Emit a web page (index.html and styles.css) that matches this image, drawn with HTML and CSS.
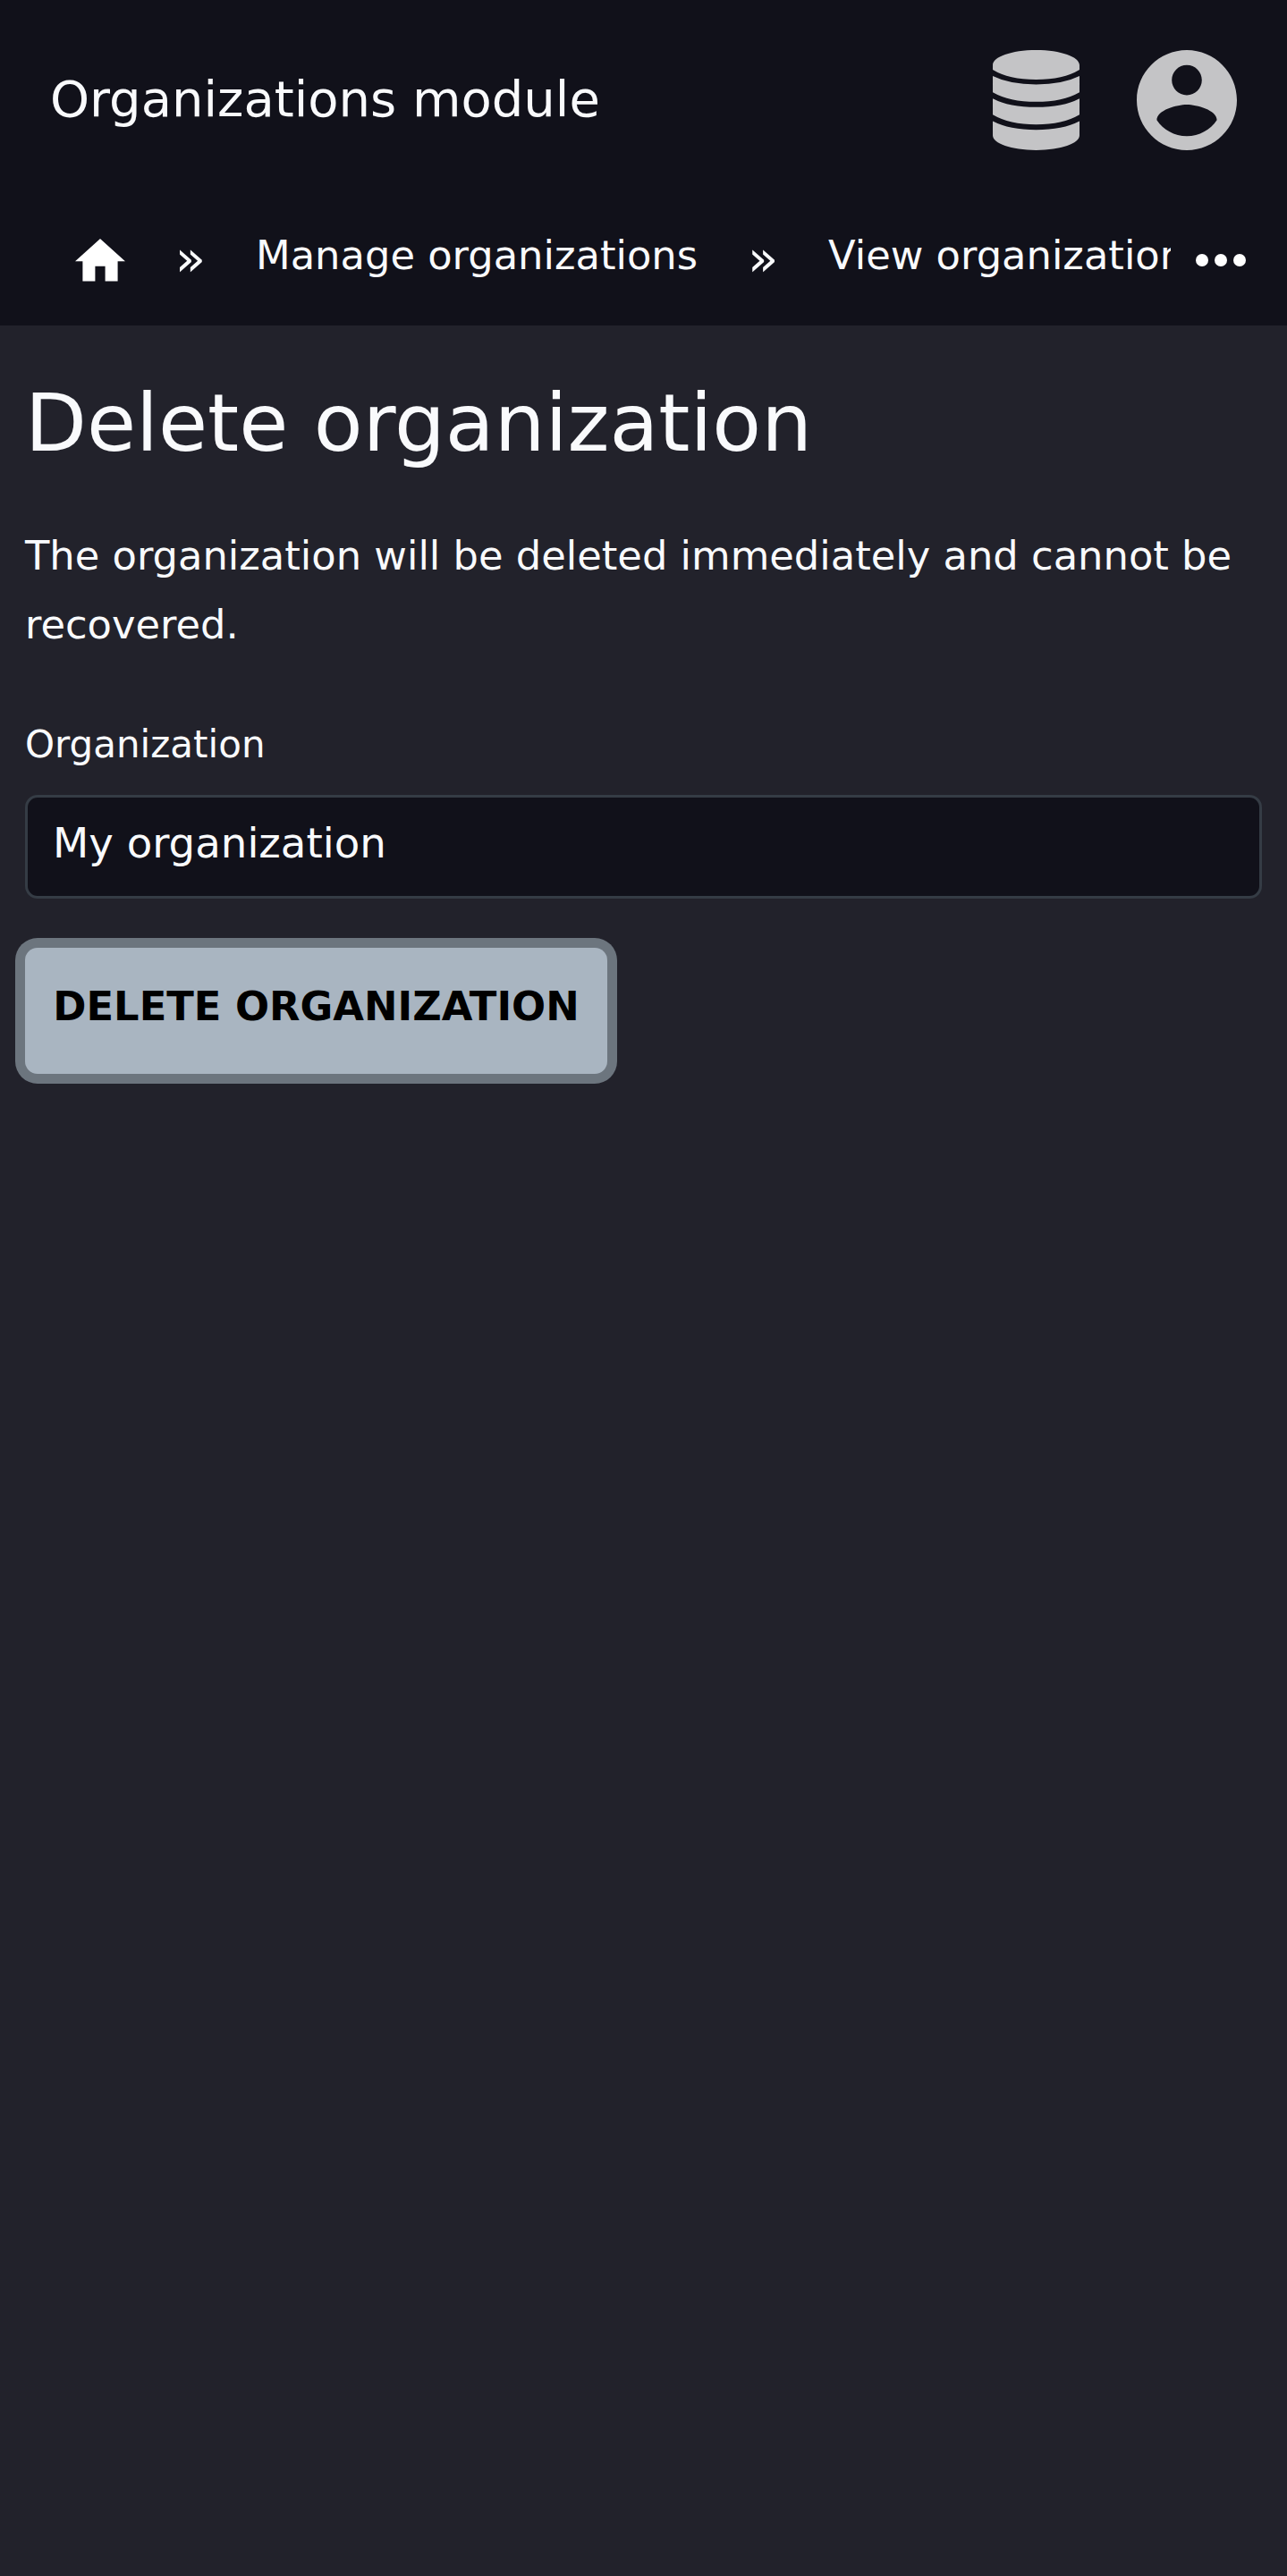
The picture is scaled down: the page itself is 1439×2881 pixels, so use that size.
FILE: index.html
```html
<!DOCTYPE html>
<html lang="en">
<head>
<meta charset="utf-8">
<title>Delete organization</title>
<link rel="stylesheet" href="styles.css">
</head>
<body>
<header class="header">
  <div class="topbar">
    <span class="brand">Organizations module</span>
    <nav class="actions">
      <svg class="icon-db" viewBox="0 0 290 335"><path d="M0 50C0 23 62 0 145 0S290 23 290 50V66Q236 99 145 99T0 66ZM0 87Q56 115 145 115T290 87V141Q234 173 145 173T0 141ZM0 162Q56 191 145 191T290 162V216Q234 249 145 249T0 216ZM0 238Q56 267 145 267T290 238V286C290 312 228 335 145 335S0 312 0 286Z"/></svg>
      <svg class="icon-user" viewBox="2 2 20 20"><path d="M12 2C6.48 2 2 6.48 2 12s4.48 10 10 10 10-4.48 10-10S17.52 2 12 2zm0 3c1.66 0 3 1.34 3 3s-1.34 3-3 3-3-1.34-3-3 1.340-3 3-3zm0 14.200c-2.500 0-4.710-1.280-6-3.220.030-1.990 4-3.080 6-3.080 1.990 0 5.970 1.090 6 3.080-1.290 1.940-3.500 3.220-6 3.220z"/></svg>
    </nav>
  </div>
  <nav class="crumbs">
    <div class="trail">
      <svg class="icon-home" viewBox="2 3 20 17"><path d="M10 20v-6h4v6h5v-8h3L12 3 2 12h3v8z"/></svg>
      <span class="sep">»</span>
      <span class="crumb">Manage organizations</span>
      <span class="sep">»</span>
      <span class="crumb">View organization</span>
    </div>
    <svg class="icon-more" viewBox="0 0 56 14"><circle cx="7" cy="7" r="7"/><circle cx="28" cy="7" r="7"/><circle cx="49" cy="7" r="7"/></svg>
  </nav>
</header>
<main class="content">
  <h1 class="heading">Delete organization</h1>
  <p class="note">The organization will be deleted immediately and cannot be recovered.</p>
  <div class="label">Organization</div>
  <div class="field">My organization</div>
  <button class="button">Delete organization</button>
</main>
</body>
</html>
```

FILE: styles.css
```css
* { box-sizing: border-box; }
body {
  margin: 0;
  min-height: 2881px;
  background: #22222b;
  color: #f9fafc;
  font-family: "DejaVu Sans", sans-serif;
  font-size: 44.8px;
}
svg { display: block; flex: none; }
.header { height: 364px; background: #11111a; }
.topbar {
  display: flex;
  justify-content: space-between;
  height: 224px;
  padding: 0 56px;
}
.brand { font-size: 56px; line-height: 221px; }
.actions { display: flex; align-items: center; gap: 64px; fill: #c4c4c6; }
.icon-db { width: 97px; height: 112px; }
.icon-user { width: 112px; height: 112px; }
.crumbs {
  display: flex;
  height: 140px;
  padding: 0 46px 0 84px;
}
.trail {
  display: flex;
  flex: none;
  width: 1225px;
  overflow: hidden;
  white-space: nowrap;
}
.icon-home { width: 56px; height: 47.6px; margin-top: 43px; fill: #fff; }
.sep { flex: none; width: 146px; font-size: 56px; line-height: 129px; text-align: center; }
.crumb { flex: none; line-height: 123px; }
.icon-more { width: 56px; height: 14px; margin: 59.5px 0 0 28px; fill: #fff; }
.content { padding: 56px 28px 0; }
.heading { margin: 0; font-size: 89.6px; font-weight: 400; line-height: 106px; }
.note { margin: 57px 0 0; line-height: 77px; }
.label { margin-top: 65px; font-size: 42px; line-height: 61px; }
.field {
  height: 115.5px;
  margin-top: 26px;
  padding: 0 28px;
  border: 3.5px solid #353c45;
  border-radius: 14px;
  background: #11111a;
  font-size: 46.67px;
  line-height: 102px;
}
.button {
  display: block;
  width: 651px;
  height: 140.5px;
  margin: 55.5px 0 0;
  padding: 0 0 8.5px;
  border: 0;
  border-radius: 14px;
  background: #a9b5c1;
  box-shadow: 0 0 0 11px #6c757e;
  color: #000;
  font: 700 44.8px/132px "DejaVu Sans", sans-serif;
  text-transform: uppercase;
  white-space: nowrap;
}
```
